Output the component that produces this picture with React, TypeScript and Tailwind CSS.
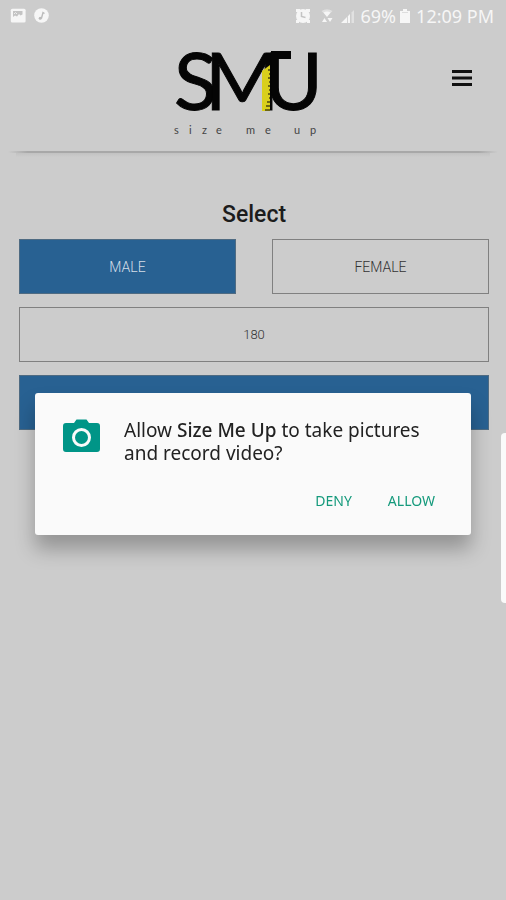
import { useState } from "react";

const StatusBar = () => (
  <div className="flex h-8 items-center justify-between pl-2.5 pr-3 text-[#f6f6f6]">
    <div className="flex items-center gap-2">
      <svg className="h-4 w-4" viewBox="0 0 16 16" aria-hidden="true">
        <rect x="0.8" y="0.8" width="14.8" height="13.6" rx="1.5" fill="currentColor" />
        <path d="M3 3h9.500v3.500l-2 1-1.500-1.500-2 2.500L5 7.500 3 9z" fill="#c4c4c4" />
        <path d="M4 6l1.500-1.500L7 6" fill="none" stroke="#eee" strokeWidth="1" />
      </svg>
      <svg className="h-4 w-4" viewBox="0 0 16 16" aria-hidden="true">
        <circle cx="7.5" cy="7.5" r="7.3" fill="currentColor" />
        <path d="M7.400 10.500L9 4.500l1.500 1" fill="none" stroke="#bbb" strokeWidth="1.400" />
        <circle cx="6.200" cy="10.200" r="1.500" fill="#bbb" />
      </svg>
    </div>

    <div className="flex items-center">
      <svg className="mr-2 h-4 w-4" viewBox="0 0 16 16" aria-hidden="true">
        <path d="M1 1h4v3H1zM11 1h4v3h-4zM1 12h3v3H1zM12 12h3v3h-3z" fill="currentColor" />
        <circle cx="8" cy="8" r="7" fill="currentColor" />
        <path d="M6.500 4v4.500l4 1" fill="none" stroke="#c4c4c4" strokeWidth="1.500" />
      </svg>
      <svg className="mr-1 h-4 w-4" viewBox="0 0 16 16" aria-hidden="true">
        <path d="M2.500 3Q8 -0.500 13.500 3L8 8.500z" fill="currentColor" opacity="0.5" />
        <path d="M4.500 4.500Q8 2.500 11.500 4.500L8 9z" fill="currentColor" />
        <path d="M3 14l2.500-4L8 14zM8.500 10h5L11 14z" fill="currentColor" />
      </svg>
      <svg className="mr-1.5 h-4 w-4" viewBox="0 0 16 16" aria-hidden="true">
        <path d="M2 15l6-6v6zM8.800 8.200L11 6v9H8.800z" fill="currentColor" />
        <path d="M12.500 15V4.500L15 2v13z" fill="currentColor" opacity="0.5" />
      </svg>
      <span className="text-lg leading-5">69%</span>
      <svg className="ml-1 mr-1.5 h-4 w-2.5" viewBox="0 0 10 16" aria-hidden="true">
        <path d="M3 1h4v2h3v12H0V3h3z" fill="currentColor" />
        <path d="M2 4h6v1H2z" fill="#ddd" />
      </svg>
      <span className="text-lg leading-5">12:09 PM</span>
    </div>
  </div>
);

const Logo = () => (
  <svg className="h-24 w-40 overflow-visible" viewBox="173 44 160 96" role="img" aria-label="SMU size me up">
    <g fontFamily="Lato, sans-serif" fontSize="80" fill="#050505" stroke="#050505" strokeWidth="1">
      <text x="174" y="110">S</text>
      <text x="205" y="110">M</text>
      <text x="264" y="110">U</text>
    </g>
    {/* bar across the top of the U */}
    <rect x="271" y="51" width="20" height="8" fill="#050505" />
    {/* measuring tape */}
    <path d="M262 71l8-6v46h-8z" fill="#d9cf1c" />
    <path
      d="M270 70h-2M270 74h-1M270 78h-2M270 82h-1M270 86h-2M270 90h-1M270 94h-2M270 98h-1M270 102h-3M270 106h-4M270 110h-5"
      stroke="#4a4410"
      strokeWidth="1.500"
    />
    <text
      x="174 189 202 216 246 265 294 310"
      y="134"
      fontFamily="Lato, sans-serif"
      fontSize="11"
      fill="#444"
    >
      sizemeup
    </text>
  </svg>
);

const PermissionDialog = () => (
  <div className="fixed inset-x-0 bottom-0 top-7 flex items-center justify-center px-[35px]">
    <div
      role="dialog"
      aria-labelledby="permission-title"
      className="w-full max-w-md rounded-[3px] bg-[#fafafa] px-7 pb-4 pt-[26px] shadow-[0_14px_20px_0_rgba(0,0,0,0.28)]"
    >
      <div className="flex gap-6">
        <svg className="h-9 w-[37px] shrink-0" viewBox="0 0 37 36" aria-hidden="true">
          <path
            d="M3 4h8l2.500-3.500h10L26 4h8a3 3 0 0 1 3 3v23a3 3 0 0 1-3 3H3a3 3 0 0 1-3-3V7a3 3 0 0 1 3-3z"
            fill="#009587"
          />
          <circle cx="18.500" cy="18.500" r="8" fill="none" stroke="#fafafa" strokeWidth="3" />
        </svg>
        <p id="permission-title" className="text-[19px] leading-[23px] text-[#222]">
          Allow <span className="font-medium">Size Me Up</span> to take pictures and record video?
        </p>
      </div>
      <div className="mt-[18px] flex justify-end gap-5">
        <button type="button" className="px-2 py-2 text-sm leading-5 text-[#159a7c]">
          DENY
        </button>
        <button type="button" className="px-2 py-2 text-sm leading-5 text-[#159a7c]">
          ALLOW
        </button>
      </div>
    </div>
  </div>
);

const App = () => {
  const [gender, setGender] = useState("male");
  const [height, setHeight] = useState("180");

  const genderClass = (value: string) =>
    gender === value
      ? "border-[#4f6b82] bg-[#286192] text-[#d5dfe8]"
      : "border-[#808080] text-[#333]";

  return (
    <div className="relative min-h-screen bg-[#cccccc] font-['Noto_Sans',sans-serif]">
      <StatusBar />

      <header className="relative flex h-[121px] justify-center pt-3">
        <Logo />
        <button type="button" aria-label="Menu" className="absolute right-8 top-8 p-0.5">
          <svg className="h-6 w-5" viewBox="0 0 20 24" aria-hidden="true">
            <path d="M0 5.500h20M0 12h20M0 18.500h20" stroke="#111" strokeWidth="3" />
          </svg>
        </button>
        <div className="absolute inset-x-2 bottom-0 h-0.5 bg-[linear-gradient(to_right,transparent,#a8a8a8_4%,#a8a8a8_96%,transparent)]" />
        <div className="absolute inset-x-4 top-full h-1 bg-linear-to-b from-[#c2c2c2] to-[#cccccc]" />
      </header>

      <main className="pl-[19px] pr-[17px] pt-12 font-[Roboto,sans-serif]">
        <h1 className="text-center text-[23px] leading-7 font-medium text-[#1c1c1c]">Select</h1>

        <div className="mt-2.5 grid grid-cols-2 gap-9">
          <button
            type="button"
            onClick={() => setGender("male")}
            className={`h-[55px] border text-sm font-light ${genderClass("male")}`}
          >
            MALE
          </button>
          <button
            type="button"
            onClick={() => setGender("female")}
            className={`h-[55px] border text-sm font-light ${genderClass("female")}`}
          >
            FEMALE
          </button>
        </div>

        <input
          type="text"
          aria-label="Height"
          value={height}
          onChange={(e) => setHeight(e.target.value)}
          className="mt-[13px] block h-[55px] w-full border border-[#808080] text-center text-[13px] font-light text-[#333]"
        />

        <button
          type="button"
          aria-label="Continue"
          className="mt-[13px] block h-[55px] w-full border border-[#4f6b82] bg-[#286192]"
        />
      </main>

      {/* edge panel handle */}
      <div className="absolute right-0 top-[433px] h-[170px] w-[5px] rounded-l-[4px] bg-[#fafafa]" />

      <PermissionDialog />
    </div>
  );
};

export default App;
